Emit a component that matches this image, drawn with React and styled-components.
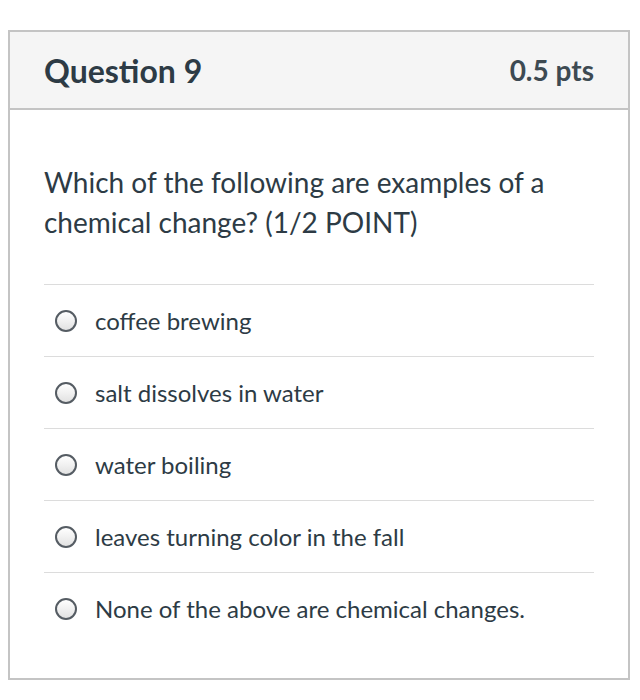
import React from 'react';
import styled, { createGlobalStyle } from 'styled-components';

const GlobalStyle = createGlobalStyle`
  html, body {
    margin: 0;
    padding: 0;
    background: #ffffff;
  }
  body {
    font-family: Lato, "Open Sans", "Liberation Sans", sans-serif;
    color: #2d3b45;
  }
`;

const Page = styled.div`
  padding: 30px 10px 20px 8px;
`;

const Card = styled.div`
  width: 618px;
  border: 2px solid #c4c4c4;
  background: #ffffff;
`;

const Header = styled.div`
  display: flex;
  justify-content: space-between;
  align-items: center;
  height: 76px;
  padding: 0 34px 0 34px;
  background: #f5f5f5;
  border-bottom: 2px solid #c4c4c4;
`;

const Title = styled.h2`
  margin: 0;
  font-size: 32px;
  font-weight: 700;
  color: #2d3b45;
`;

const Points = styled.span`
  font-size: 28px;
  font-weight: 700;
  color: #3d4a52;
`;

const Body = styled.div`
  padding: 52px 34px 34px 34px;
`;

const Question = styled.p`
  margin: 0 0 42px 0;
  font-size: 28px;
  line-height: 40px;
  color: #2d3b45;
`;

const Answers = styled.div`
  display: flex;
  flex-direction: column;
`;

const Answer = styled.label`
  display: flex;
  align-items: center;
  gap: 18px;
  height: 71px;
  padding-left: 11px;
  border-top: 1px solid #dcdcdc;
  font-size: 24px;
  color: #2d3b45;
`;

const Radio = styled.span`
  width: 18px;
  height: 18px;
  border-radius: 50%;
  border: 2px solid #555c63;
  background: linear-gradient(#ffffff, #e2e2e2);
  flex-shrink: 0;
`;

const options = [
  'coffee brewing',
  'salt dissolves in water',
  'water boiling',
  'leaves turning color in the fall',
  'None of the above are chemical changes.',
];

export default function App() {
  return (
    <>
      <GlobalStyle />
      <Page>
        <Card>
          <Header>
            <Title>Question 9</Title>
            <Points>0.5 pts</Points>
          </Header>
          <Body>
            <Question>
              Which of the following are examples of a chemical change? (1/2 POINT)
            </Question>
            <Answers>
              {options.map((o) => (
                <Answer key={o}>
                  <Radio />
                  {o}
                </Answer>
              ))}
            </Answers>
          </Body>
        </Card>
      </Page>
    </>
  );
}
